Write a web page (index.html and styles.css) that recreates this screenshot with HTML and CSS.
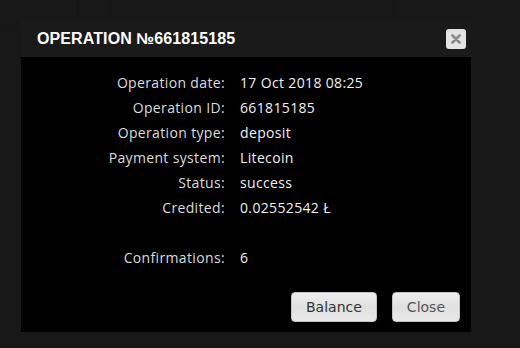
FILE: index.html
```html
<!DOCTYPE HTML>
<html>
<head>
<meta charset="UTF-8">
<title>Operation</title>
<link rel="stylesheet" href="styles.css">
</head>
<body>
<div id="backdrop">
	<div class="grid-v grid-v1"></div>
	<div class="grid-v grid-v2"></div>
	<div class="grid-v grid-v3"></div>
	<div class="grid-h"></div>
</div>

<div id="dialog">
	<div id="dialog-header">
		<h1>Operation №661815185</h1>
		<button class="btn-x" title="Close">
			<svg width="10" height="10" viewBox="0 0 10 10"><path d="M1.5 1.5 L8.5 8.5 M8.5 1.5 L1.5 8.5" stroke="#8a8a8a" stroke-width="2.6" stroke-linecap="round"/></svg>
		</button>
	</div><!-- end of header -->

	<div id="dialog-content">
		<div class="info">
			<span class="label">Operation date:</span><span class="value">17 Oct 2018 08:25</span>
			<span class="label">Operation ID:</span><span class="value">661815185</span>
			<span class="label">Operation type:</span><span class="value">deposit</span>
			<span class="label">Payment system:</span><span class="value">Litecoin</span>
			<span class="label">Status:</span><span class="value">success</span>
			<span class="label">Credited:</span><span class="value">0.02552542 Ł</span>
			<span class="label spacer"></span><span class="value spacer"></span>
			<span class="label">Confirmations:</span><span class="value">6</span>
		</div>
		<div class="buttons">
			<button class="btn">Balance</button>
			<button class="btn btn-close">Close</button>
		</div>
	</div><!-- end of content -->
</div><!-- end of dialog -->
</body>
</html>
```
FILE: styles.css
```css
body{
	margin:0;
	padding:0;
	background:#181818;
	font-family:"Open Sans", Arial, sans-serif;
	width:520px;
	height:348px;
	overflow:hidden;
	position:relative;
}
#backdrop .grid-v{
	position:absolute;
	top:0;
	width:1px;
	height:20px;
	background:#141414;
}
#backdrop .grid-v1{ left:77px; }
#backdrop .grid-v2{ left:110px; }
#backdrop .grid-v3{ left:393px; }
#backdrop .grid-h{
	position:absolute;
	top:28px;
	left:0;
	width:21px;
	height:1px;
	background:#141414;
}

#dialog{
	position:absolute;
	left:21px;
	top:20px;
	width:450px;
}
#dialog-header{
	height:37px;
	background:#1a1a1a;
	display:flex;
	align-items:center;
	justify-content:space-between;
	padding:0 5px 0 16px;
}
#dialog-header h1{
	margin:0;
	font-family:"Liberation Sans", Arial, sans-serif;
	font-size:16px;
	font-weight:bold;
	letter-spacing:0.1px;
	text-transform:uppercase;
	color:#fff;
}
.btn-x{
	width:20px;
	height:20px;
	padding:0;
	border:none;
	border-radius:3px;
	background:#e4e4e4;
	display:flex;
	align-items:center;
	justify-content:center;
}

#dialog-content{
	background:#000;
	height:275px;
	padding-top:13px;
	box-sizing:border-box;
}
.info{
	display:grid;
	grid-template-columns:204px auto;
	column-gap:15px;
	font-size:14px;
	line-height:25px;
	letter-spacing:0.35px;
}
.info .label{
	text-align:right;
	color:#dcdcdc;
}
.info .value{
	color:#f0f0f0;
}
.info .spacer{
	height:25px;
}
.buttons{
	display:flex;
	justify-content:flex-end;
	gap:15px;
	padding:22px 11px 0 0;
}
.btn{
	height:30px;
	padding:0 14px;
	font-family:"DejaVu Sans", Verdana, sans-serif;
	font-size:14px;
	color:#333;
	background:linear-gradient(#eeeeee, #e0e0e0 50%, #e9e9e9);
	border:1px solid #c4c4c4;
	border-radius:4px;
}
.btn-close{
	color:#555;
}
```
